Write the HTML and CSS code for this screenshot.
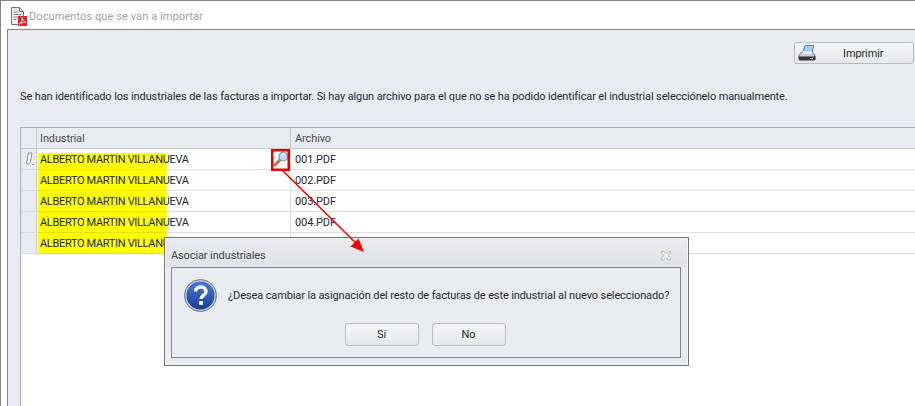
FILE: index.html
```html
<!DOCTYPE html>
<html lang="es">
<head>
<meta charset="utf-8">
<title>Documentos que se van a importar</title>
<link rel="stylesheet" href="styles.css">
</head>
<body>
<div class="window">
  <header class="titlebar">
    <svg class="doc-icon" width="17" height="19" viewBox="0 0 17 19">
      <path d="M1.500.5h8l4 4v13h-12z" fill="#e9ece8" stroke="#6f7873"/>
      <path d="M9.500.5v4h4" fill="#c9d0cb" stroke="#6f7873"/>
      <path d="M3.500 5h4M3.500 7.500h8M3.500 10h8M3.500 12.500h3" stroke="#7f8c83"/>
      <rect x="8" y="9" width="9" height="10" fill="#e8212c"/>
      <path d="M9.500 17c2-1 3-4 2.800-6.500.5 3 1.500 4.500 3.500 4.700-2 0-4 .6-6.300 1.800z" fill="none" stroke="#fff" stroke-width=".9"/>
    </svg>
    <span class="title">Documentos que se van a importar</span>
  </header>
  <main class="panel">
    <div class="toolbar">
      <button class="btn print">
        <svg width="19" height="17" viewBox="0 0 19 17">
          <path d="M7 .5h9l-2.500 8H4.500z" fill="#a9cdea" stroke="#4b7ca6" stroke-width=".9"/>
          <path d="M1 11c0-2 1.500-3.500 3.500-3.500h9c2 0 3.500 1.500 3.500 3.500v2H1z" fill="#c9cbcd" stroke="#5b5e61" stroke-width=".8"/>
          <path d="M.5 11.500H17.500V14c0 1-1 1.500-2 1.500h-13c-1 0-2-.5-2-1.500z" fill="#34373a"/>
          <path d="M5 6.500h8.500l1 2.500H4z" fill="#f4f6f7"/>
          <path d="M12 13.500h3" stroke="#d5d8da"/>
        </svg>
        <span class="print-label">Imprimir</span>
      </button>
    </div>
    <p class="message">Se han identificado los industriales de las facturas a importar. Si hay algun archivo para el que no se ha podido identificar el industrial selecciónelo manualmente.</p>
    <div class="grid">
      <div class="row head">
        <div class="ind"></div>
        <div class="col-a">Industrial</div>
        <div class="col-b">Archivo</div>
      </div>
      <div class="row">
        <div class="ind">
          <svg width="10" height="14" viewBox="0 0 10 14"><path d="M4.500 1h3.500L6.300 10.500C6 12.200 2.400 12.700 2.500 11z" fill="#fff" stroke="#868b90"/><path d="M8 12.500h1.500" stroke="#868b90"/></svg>
        </div>
        <div class="col-a mark first"><span class="name">ALBERTO MARTIN VILLANUEVA</span>
          <span class="lookup">
            <svg width="16" height="16" viewBox="0 0 16 16">
              <path d="M2 14 7 9" stroke="#c0733f" stroke-width="3" stroke-linecap="round"/>
              <circle cx="10.500" cy="5.500" r="4.500" fill="#bcdcf2" stroke="#6f93ae" stroke-width="1.200"/>
              <path d="M8.300 4.800c.4-1.200 1.300-1.700 2.400-1.700" stroke="#fff" stroke-width="1.200" fill="none"/>
            </svg>
          </span>
        </div>
        <div class="col-b">001.PDF</div>
      </div>
      <div class="row">
        <div class="ind"></div>
        <div class="col-a mark"><span class="name">ALBERTO MARTIN VILLANUEVA</span></div>
        <div class="col-b">002.PDF</div>
      </div>
      <div class="row">
        <div class="ind"></div>
        <div class="col-a mark"><span class="name">ALBERTO MARTIN VILLANUEVA</span></div>
        <div class="col-b">003.PDF</div>
      </div>
      <div class="row">
        <div class="ind"></div>
        <div class="col-a mark"><span class="name">ALBERTO MARTIN VILLANUEVA</span></div>
        <div class="col-b">004.PDF</div>
      </div>
      <div class="row">
        <div class="ind"></div>
        <div class="col-a mark"><span class="name">ALBERTO MARTIN VILLANUEVA</span></div>
        <div class="col-b"></div>
      </div>
    </div>
  </main>
</div>

<section class="dialog">
  <div class="dialog-head">
    <span>Asociar industriales</span>
    <svg width="12" height="11" viewBox="0 0 12 11"><path d="M1.500 1.500h2L6 4l2.500-2.500h2v2L8 5.500l2.500 2.500v2h-2L6 7.500 3.500 10h-2V8L4 5.500 1.500 3z" fill="#f1f3f5" stroke="#b3b8bd" stroke-width=".9"/></svg>
  </div>
  <div class="dialog-body">
    <div class="question">
      <svg width="33" height="33" viewBox="0 0 33 33">
        <defs>
          <linearGradient id="qb" x1="0" y1="0" x2="0" y2="1">
            <stop offset="0" stop-color="#4a7bd6"/>
            <stop offset="1" stop-color="#173c94"/>
          </linearGradient>
        </defs>
        <circle cx="16.500" cy="16.500" r="15" fill="url(#qb)" stroke="#c5c9cf" stroke-width="2"/>
        <circle cx="16.500" cy="16.500" r="16" fill="none" stroke="#6f7680" stroke-width="1"/>
        <path d="M11.500 12.500c0-6 10.500-6 10.500 0 0 4-5 3.500-5 7.500" fill="none" stroke="#fff" stroke-width="3.400"/>
        <rect x="15" y="22" width="4" height="4" rx="1" fill="#fff"/>
      </svg>
      <span class="question-text">¿Desea cambiar la asignación del resto de facturas de este industrial al nuevo seleccionado?</span>
    </div>
    <div class="actions">
      <button class="btn choice">Sí</button>
      <button class="btn choice">No</button>
    </div>
  </div>
</section>

<svg class="arrow" width="100" height="100" viewBox="0 0 100 100">
  <path d="M1 1 78 77" stroke="#f00000" stroke-width="1.500"/>
  <path d="M83 83 69.500 77.500 77.500 69.500z" fill="#f00000"/>
</svg>

<svg class="marker" width="19" height="22" viewBox="0 0 19 22"><rect x="1.250" y="1.250" width="16.500" height="19.500" fill="none" stroke="#e60000" stroke-width="2.500"/></svg>
</body>
</html>
```
FILE: styles.css
```css
* { box-sizing: border-box; }

html, body {
  margin: 0;
  width: 915px;
  height: 406px;
  overflow: hidden;
  background: #fff;
}

body {
  position: relative;
  font-family: Roboto, "Noto Sans", sans-serif;
  font-size: 11px;
  letter-spacing: -0.115px;
  color: #1f2933;
}

.window {
  height: 406px;
  display: flex;
  flex-direction: column;
  padding-left: 7px;
  border-top: 1px solid #7f858d;
  border-left: 1px solid #7f858d;
}

.titlebar {
  height: 28px;
  display: flex;
  align-items: center;
  gap: 2px;
  padding: 2px 0 0 3px;
  margin-left: -1px;
}

.title { color: #a0a0a8; letter-spacing: 0.09px; }

.panel {
  flex: 1;
  min-height: 0;
  background: #e8ebf0;
  border-top: 1px solid #7f858d;
  border-left: 1px solid #7f858d;
  padding-left: 12px;
  display: flex;
  flex-direction: column;
  margin-left: -1px;
}

.toolbar {
  height: 41px;
  padding-top: 12px;
  display: flex;
  justify-content: flex-end;
}

.btn {
  font: inherit;
  letter-spacing: inherit;
  color: inherit;
  border: 1px solid #b6bbc2;
  border-radius: 3px;
  background: linear-gradient(#f5f6f8, #e6e8ec);
  padding: 0;
}

.print {
  width: 120px;
  height: 22px;
  margin-right: 1px;
  display: flex;
  align-items: center;
  padding-left: 3px;
}

.print-label { margin-left: 26px; }

.message {
  margin: 19px 0 0;
  height: 37px;
  line-height: 14px;
  white-space: nowrap;
}

.grid {
  flex: 1;
  background: #fff;
  border-top: 1px solid #a8afb8;
  border-left: 1px solid #a8afb8;
}

.row {
  display: flex;
  height: 21px;
  border-bottom: 1px solid #dcdfe3;
  line-height: 21px;
}

.head {
  background: #e8ebf0;
  border-bottom-color: #c8ccd2;
  line-height: 22px;
}

.ind {
  width: 16px;
  flex: none;
  background: #e8ebf0;
  border-right: 1px solid #c8ccd2;
  display: flex;
  align-items: center;
  justify-content: center;
}

.col-a, .col-b {
  display: flex;
  align-items: flex-start;
  padding-left: 4px;
  white-space: nowrap;
  color: #1e2832;
}

.col-a {
  width: 254px;
  flex: none;
  border-right: 1px solid #dcdfe3;
  justify-content: space-between;
}

.col-b { flex: 1; }

.head .col-a, .head .col-b { color: #454e58; }
.head .col-a { border-right-color: #c8ccd2; padding-left: 3px; }

.mark {
  margin-bottom: -1px;
  padding-left: 3px;
  background:
    linear-gradient(#e6e600, #e6e600) no-repeat 1px 100% / 129px 1px,
    linear-gradient(#ff0, #ff0) no-repeat 1px 0 / 129px 100%;
}

.mark.first {
  background-position: 1px 100%, 1px 4px;
}

.name { letter-spacing: -0.33px; }

.lookup { display: flex; margin: 2px 1px 0 0; }

.marker, .arrow, .dialog { position: absolute; }

.marker { left: 271px; top: 149px; }

.arrow { left: 281px; top: 169px; }

.dialog {
  left: 164px;
  top: 237px;
  width: 525px;
  height: 129px;
  background: #e8ebf0;
  border: 1px solid #6d737b;
  box-shadow: inset 0 0 0 1px #f4f5f7;
  padding: 0 7px 7px 6px;
  display: flex;
  flex-direction: column;
}

.dialog-head {
  height: 28px;
  display: flex;
  justify-content: space-between;
  align-items: center;
  padding: 4px 15px 0 5px;
  background: linear-gradient(#e8ebf0, #e0e2e6);
  margin: 1px -6px 0 -5px;
  color: #3b444e;
}

.dialog-body {
  flex: 1;
  border: 1px solid #7f858d;
  background: #e8ebf0;
  padding: 11px 0 0 12px;
}

.question {
  display: flex;
  align-items: center;
  gap: 11px;
  height: 33px;
}

.question-text { white-space: nowrap; }

.actions {
  display: flex;
  justify-content: center;
  gap: 13px;
  margin-top: 11px;
  padding-right: 14px;
}

.choice { width: 74px; height: 23px; }
```
